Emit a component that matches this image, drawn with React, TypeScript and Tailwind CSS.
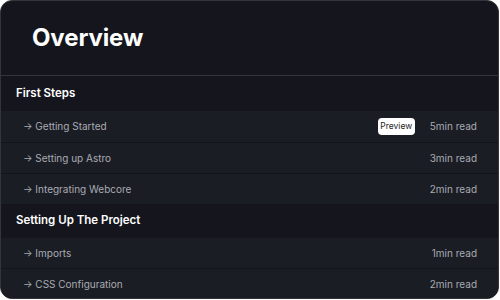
const sections = [
  {
    title: "First Steps",
    items: [
      { label: "Getting Started", time: "5min read", preview: true },
      { label: "Setting up Astro", time: "3min read" },
      { label: "Integrating Webcore", time: "2min read" },
    ],
  },
  {
    title: "Setting Up The Project",
    items: [
      { label: "Imports", time: "1min read" },
      { label: "CSS Configuration", time: "2min read" },
    ],
  },
];

export default function App() {
  return (
    <div className="w-[500px] h-[300px] bg-white" style={{ fontFamily: "Inter, 'Noto Sans', sans-serif" }}>
      <div className="w-[499px] h-[299px] rounded-[12px] border border-[#34353b] bg-[#15161d] overflow-hidden flex flex-col">
        <div className="h-[75px] shrink-0 border-b border-[#34353b] flex items-center px-[31px]">
          <h1 className="text-[24px] font-bold text-white tracking-[-0.005em]">Overview</h1>
        </div>
        {sections.map((section, i) => (
          <div key={section.title} className="flex flex-col">
            <div className={`${i === 0 ? "h-[35px]" : "h-[34px]"} flex items-center px-[15px]`}>
              <h2 className="text-[11.5px] font-semibold text-white">{section.title}</h2>
            </div>
            <div className="flex flex-col gap-px bg-[#13141a]">
              {section.items.map((item) => (
                <div
                  key={item.label}
                  className={`${item.preview ? "h-[31px]" : "h-[30px]"} bg-[#1b1d24] flex items-center pl-[22px] pr-[21px] text-[10px] text-[#a9abb3]`}
                >
                  <span className="flex-1">→ {item.label}</span>
                  <span className="flex items-center gap-[15px]">
                    {item.preview && (
                      <span className="w-[37px] h-[17px] flex items-center justify-center bg-white text-[#1b1d24] text-[8.5px] rounded-[4px]">
                        Preview
                      </span>
                    )}
                    <span>{item.time}</span>
                  </span>
                </div>
              ))}
            </div>
          </div>
        ))}
      </div>
    </div>
  );
}
